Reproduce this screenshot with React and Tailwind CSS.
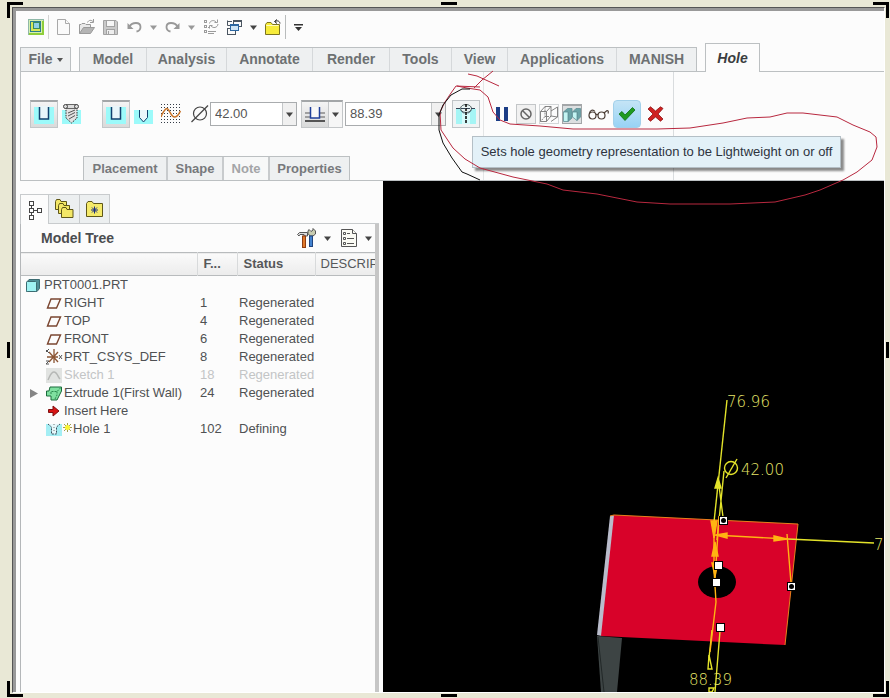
import React, { useState } from 'react';

const tabs = [
    { name: 'Model', width: 'w-[67px]' },
    { name: 'Analysis', width: 'w-20' },
    { name: 'Annotate', width: 'w-[86px]' },
    { name: 'Render', width: 'w-[77px]' },
    { name: 'Tools', width: 'w-[62px]' },
    { name: 'View', width: 'w-14' },
    { name: 'Applications', width: 'w-[109px]' },
    { name: 'MANISH', width: 'w-[79px]' },
];

const subTabs = [
    { name: 'Placement', width: 'w-[84px]' },
    { name: 'Shape', width: 'w-14' },
    { name: 'Note', width: 'w-[46px]', disabled: true },
    { name: 'Properties', width: 'w-[79px]' },
];

const rows = [
    { name: 'PRT0001.PRT', icon: 'part', root: true },
    { name: 'RIGHT', icon: 'plane', num: '1', status: 'Regenerated' },
    { name: 'TOP', icon: 'plane', num: '4', status: 'Regenerated' },
    { name: 'FRONT', icon: 'plane', num: '6', status: 'Regenerated' },
    { name: 'PRT_CSYS_DEF', icon: 'csys', num: '8', status: 'Regenerated' },
    { name: 'Sketch 1', icon: 'sketch', num: '18', status: 'Regenerated', muted: true },
    { name: 'Extrude 1(First Wall)', icon: 'extrude', num: '24', status: 'Regenerated', expandable: true },
    { name: 'Insert Here', icon: 'insert' },
    { name: 'Hole 1', icon: 'hole', num: '102', status: 'Defining', isNew: true },
];

const Caret = ({ className = 'text-[#444]' }) => (
    <svg width="7" height="5" viewBox="0 0 7 5" className={`shrink-0 ${className}`}>
        <path d="M0 0.5H7L3.5 5Z" fill="currentColor" />
    </svg>
);

/* ---- quick access icons ---- */

const AppIcon = () => (
    <svg width="16" height="16" viewBox="0 0 16 16">
        <rect x="0.5" y="0.5" width="15" height="15" fill="#d5efb0" stroke="#8fb8a8" />
        <path d="M1 15H15V2" fill="none" stroke="#8fce3a" strokeWidth="2" />
        <rect x="2.5" y="2.5" width="10" height="10" fill="#8ed2e6" stroke="#2c7d8e" />
        <path d="M3 3H5V10H12V12H3Z" fill="#d8e858" />
        <rect x="5.5" y="3.5" width="6" height="6" fill="#8fd0e8" stroke="#3b8a62" />
    </svg>
);

const NewIcon = () => (
    <svg width="13" height="16" viewBox="0 0 13 16" fill="#fafafa" stroke="#a9a9a9">
        <path d="M0.5 0.5H8.5L12.5 4.5V15.5H0.5Z" />
        <path d="M8.5 0.5V4.5H12.5" />
    </svg>
);

const OpenIcon = () => (
    <svg width="16" height="16" viewBox="0 0 16 16" fill="none" stroke="#9a9a9a">
        <path d="M0.5 14.5V5.5H2L3 4.5H6L7 5.5H11.5V8.5" fill="#e9e9e9" />
        <path d="M0.5 14.5L4.5 8.5H15.5L11.5 14.5Z" fill="#b4b4b4" />
        <path d="M8.5 3.5C9.5 1 12.5 0.5 14.5 3M14.5 0V3.5H11" />
    </svg>
);

const SaveIcon = () => (
    <svg width="15" height="15" viewBox="0 0 15 15" stroke="#a2a2a2">
        <path d="M0.5 0.5H13L14.5 2V14.5H0.5Z" fill="#c9c9c9" />
        <rect x="3.5" y="0.5" width="8" height="6" fill="#f6f6f6" />
        <rect x="3.5" y="9.5" width="8" height="5" fill="#eee" />
        <path d="M5.5 11V14" />
    </svg>
);

const UndoIcon = ({ flip }) => (
    <svg width="15" height="12" viewBox="0 0 15 12" className={flip ? '-scale-x-100' : ''}>
        <path d="M2.5 5.5C5 1 13.5 0.5 13.5 6C13.5 8.5 12 10 9.5 10.5" fill="none" stroke="#999" strokeWidth="1.8" />
        <path d="M0.5 2V8H6.5Z" fill="#999" />
    </svg>
);

const RegenIcon = () => (
    <svg width="16" height="16" viewBox="0 0 16 16" fill="none" stroke="#9b9b9b">
        <rect x="1.5" y="1.5" width="2" height="2" />
        <rect x="1.5" y="6.5" width="2" height="2" />
        <rect x="1.5" y="11.5" width="2" height="2" />
        <path d="M5 12.5H13M5 14.5H11M5 8.5H7" />
        <path d="M6.500 4.500C7 1.500 11 0.500 13 3M14.500 0.500V3.500H11.500M15 5C14.500 9 10 9.500 8 7M6.500 9.500V6.500H9.500" />
    </svg>
);

const WindowsIcon = () => (
    <svg width="15" height="15" viewBox="0 0 15 15" fill="#fafafa" stroke="#4a5560">
        <rect x="6.5" y="0.5" width="8" height="6" />
        <path d="M6.5 1.5H14.5" />
        <rect x="0.5" y="8.5" width="8" height="6" />
        <path d="M0.5 1.5H5M0.5 0.5V5.5H3" />
        <rect x="3.5" y="4.5" width="8" height="6" fill="#cfe5f5" stroke="#2b66a0" />
        <path d="M3.5 5.5H11.5" stroke="#2b66a0" />
    </svg>
);

const CloseFolderIcon = () => (
    <svg width="16" height="16" viewBox="0 0 16 16">
        <path d="M0.5 15.5V5.5L2 3.5H6L7.5 5.5H14.5V15.5Z" fill="#f7ec3a" stroke="#7c7420" />
        <path d="M1.5 7V6.5H13.5" stroke="#fffbc0" fill="none" />
        <path d="M15 4.5C14.5 1.5 12 1.5 10 2.5M12 0.5L9.5 2.5L12 4.5" stroke="#222" fill="none" />
    </svg>
);

/* ---- dashboard icons ---- */

const HoleU = () => (
    <svg width="20" height="18" viewBox="0 0 20 18">
        <rect y="1" width="20" height="17" fill="#9cfafa" />
        <path d="M5 0H15V13H5Z" fill="#e9f6fa" />
        <path d="M5.5 1V13H14.5V1" fill="none" stroke="#12406e" strokeWidth="1.5" />
    </svg>
);

const HoleScrew = () => (
    <svg width="19" height="20" viewBox="0 0 19 20">
        <rect y="6" width="19" height="14" fill="#9cfafa" />
        <path d="M4 4H15V14L9.5 19L4 14Z" fill="#e3e3e3" stroke="#333" strokeDasharray="1.5 1" />
        <path d="M6 9L13 6M6 12L13 8.5M7 15L13 11.5" stroke="#555" />
        <rect x="4.5" y="0.5" width="10" height="4" fill="#ddd" stroke="#666" />
        <circle cx="3.5" cy="2.5" r="2" fill="#ddd" stroke="#444" />
        <circle cx="14.5" cy="2.5" r="2" fill="#ddd" stroke="#444" />
    </svg>
);

const HoleV = () => (
    <svg width="19" height="15" viewBox="0 0 19 15">
        <rect y="1" width="19" height="14" fill="#9cfafa" />
        <path d="M5.5 1V8.5L9.5 13L13.5 8.5V1" fill="#e9f6fa" stroke="#12406e" />
    </svg>
);

const HoleSketch = () => (
    <svg width="20" height="20" viewBox="0 0 20 20">
        <path
            d="M0 0.5H20M0 3.5H20M0 6.5H20M0 9.5H20M0 12.5H20M0 15.5H20M0 18.5H20"
            stroke="#333b46"
            strokeDasharray="1 2"
        />
        <path d="M0 13C1 10 4 4.500 6 4.500S10 13 13.500 13S18 9 19.500 7" fill="none" stroke="#c8742a" strokeWidth="1.5" />
    </svg>
);

const DiameterIcon = () => (
    <svg width="18" height="18" viewBox="0 0 18 18" fill="none" stroke="#444" strokeWidth="1.2">
        <circle cx="9" cy="8.5" r="6.5" />
        <path d="M0.5 17L17 0.5" />
    </svg>
);

const DepthIcon = () => (
    <svg width="20" height="16" viewBox="0 0 20 16">
        <path d="M0 6H5M15 6H20M0 10H5M15 10H20" stroke="#888" strokeWidth="1.5" />
        <path d="M0 14H20" stroke="#555" strokeWidth="2" />
        <path d="M5.5 0V11H14.5V0" fill="#f8f8f8" stroke="#1f3f9a" strokeWidth="1.5" />
    </svg>
);

const LightweightIcon = () => (
    <svg width="20" height="20" viewBox="0 0 20 20">
        <rect y="5" width="20" height="15" fill="#a5f5f5" />
        <rect x="6" y="5" width="8" height="15" fill="#d6fbfb" />
        <ellipse cx="10" cy="4.5" rx="5.5" ry="4" fill="#e8f4f4" stroke="#566" />
        <path d="M0 4.5H20" stroke="#345" strokeDasharray="4 1" />
        <path d="M5 6.500L8 9.500M15 6.500L12 9.500" stroke="#345" />
        <path d="M10 0V20" stroke="#111" strokeWidth="1.600" strokeDasharray="3 1" />
    </svg>
);

const NoIcon = () => (
    <svg width="12" height="12" viewBox="0 0 12 12" fill="none" stroke="#666" strokeWidth="1.5">
        <circle cx="6" cy="6" r="5" />
        <path d="M2.5 2.5L9.5 9.5" />
    </svg>
);

const WireBox = () => (
    <svg width="18" height="16" viewBox="0 0 18 16" fill="none" stroke="#777" strokeWidth="0.9">
        <path d="M0.5 5.5H6.5V15.5H0.5ZM0.5 5.5L5 0.5H11L6.5 5.5M11 0.5V10L6.5 15.5" />
        <path d="M5 0.5V10.5H11M5 10.5L0.5 15.5" strokeDasharray="2 1" />
        <path d="M11 5L17.5 1V11L11 15.5M11 10L17.5 11" />
    </svg>
);

const ShadedBox = () => (
    <svg width="18" height="15" viewBox="0 0 18 15" stroke="#5f8f96" strokeWidth="0.8">
        <path d="M0.5 5L4.5 1.5H9V11L5 14.5V5Z" fill="#6aa4a8" />
        <path d="M0.5 5H5V14.5H0.5Z" fill="#c4f5f3" />
        <path d="M9.5 5L13 1.5H17.5V10L14 13.5V5Z" fill="#6aa4a8" />
        <path d="M9.5 5H14V13.5L9.5 10Z" fill="#c4f5f3" />
    </svg>
);

const Glasses = () => (
    <svg width="21" height="11" viewBox="0 0 21 11" fill="none" stroke="#4a3c34" strokeWidth="1.2">
        <circle cx="4.5" cy="6.5" r="3.5" />
        <circle cx="13.5" cy="6.5" r="3.5" />
        <path d="M8 6C8.5 5 9.5 5 10 6M1.5 4.5C2 1 5 0 7 2.5M16 4L19 1.5C20.5 1.5 20.5 3 20 4.5" />
    </svg>
);

const CheckIcon = () => (
    <svg width="18" height="14" viewBox="0 0 18 14">
        <path d="M1 7L4 4.5L7 8L14.5 0.5L17 3L7 13.5Z" fill="#1f9a1f" stroke="#0d6f12" strokeWidth="0.8" />
    </svg>
);

const CrossIcon = () => (
    <svg width="17" height="16" viewBox="0 0 17 16">
        <path
            d="M1 3L3.5 0.8L8.5 5L13.5 0.8L16 2.5L11 8L16 13L13.5 15.2L8.5 11L3.5 15.2L1 13L6 8Z"
            fill="#cf2222"
            stroke="#8e1414"
            strokeWidth="0.8"
        />
    </svg>
);

/* ---- model tree icons ---- */

const treeIcons = {
    part: (
        <svg width="14" height="13" viewBox="0 0 14 13" stroke="#3c6c72">
            <path d="M0.5 3.5L3 0.5H13.5V9.5L11 12.5H0.5Z" fill="#4f8f96" />
            <rect x="0.5" y="2.5" width="10" height="10" rx="1" fill="#9ff3f3" />
        </svg>
    ),
    plane: (
        <svg width="16" height="11" viewBox="0 0 16 11">
            <path d="M1.5 10L5 1H14.5L10.5 10Z" fill="none" stroke="#7a4630" strokeWidth="1.4" />
        </svg>
    ),
    csys: (
        <svg width="17" height="16" viewBox="0 0 17 16" fill="none" stroke="#8b5534">
            <path d="M1 8H12M8 0V14M3 3L12 13M12 3L3 13" strokeWidth="1.3" />
            <path d="M0 1L3 4M3 0L0 3M13 6L16 10M16 6L13 10M0 12H3L0 15H3" stroke="#555" />
        </svg>
    ),
    sketch: (
        <svg width="16" height="15" viewBox="0 0 16 15">
            <rect width="16" height="15" fill="#e1e3e1" />
            <path d="M2 12C4 8 5 4 8 4S12 9 14 11" fill="none" stroke="#b5b7b5" strokeWidth="1.5" />
        </svg>
    ),
    extrude: (
        <svg width="16" height="15" viewBox="0 0 16 15">
            <path d="M4 1H15.5V5L11 14H5V10H0.5V5H3Z" fill="#7fe0a0" stroke="#1b6b3b" />
            <path d="M5 8V5.5H11L15 1.5M11 5.5V9L9 13" fill="none" stroke="#2a8a4f" strokeDasharray="2 1" />
        </svg>
    ),
    insert: (
        <svg width="12" height="12" viewBox="0 0 12 12">
            <path d="M0.5 4.5H5V1L11 6L5 11V7.5H0.5Z" fill="#d81414" stroke="#7e1010" />
        </svg>
    ),
    hole: (
        <svg width="16" height="13" viewBox="0 0 16 13">
            <rect y="1" width="16" height="12" fill="#a4eef4" />
            <path d="M2 1L5.5 4V11H10.5V4L14 1" fill="#e6f8fb" stroke="#3a4f5c" strokeDasharray="2 1" />
            <path d="M8 1V10" stroke="#777" strokeDasharray="1 2" />
        </svg>
    ),
};

const NewMark = () => (
    <svg width="9" height="9" viewBox="0 0 9 9" className="mb-1">
        <path d="M4.5 0V9M0 4.5H9M1 1L8 8M8 1L1 8" stroke="#8a8420" strokeWidth="0.8" />
        <circle cx="4.5" cy="4.5" r="2.5" fill="#f8f430" />
    </svg>
);

const TreeTabIcon = () => (
    <svg width="14" height="20" viewBox="0 0 14 20" fill="none" stroke="#444">
        <rect x="1.5" y="1.5" width="4" height="4" />
        <rect x="1.5" y="8.5" width="4" height="4" />
        <rect x="1.5" y="15.5" width="4" height="4" />
        <rect x="9.5" y="8.5" width="4" height="4" />
        <path d="M3.5 5.5V8.5M3.5 12.5V15.5M5.5 10.5H9.5" />
    </svg>
);

const FoldersIcon = () => (
    <svg width="19" height="20" viewBox="0 0 19 20" fill="#f3e766" stroke="#5f5718">
        <path d="M0.5 10.5V2.5L1.5 0.5H5L6 2.5H11.5V10.5Z" />
        <path d="M3.5 14.5V6.5L4.5 4.5H8L9 6.5H14.5V14.5Z" />
        <path d="M6.5 18.5V10.5L7.5 8.5H11L12 10.5H18V18.5Z" />
    </svg>
);

const FavoritesIcon = () => (
    <svg width="17" height="16" viewBox="0 0 17 16">
        <path d="M0.5 15.5V2.5L2 0.5H6L7.5 2.5H16.5V15.5Z" fill="#f5ea6a" stroke="#5f5718" />
        <path d="M8.5 5.5V12.5M5 9H12M6 6.5L11 11.5M11 6.5L6 11.5" stroke="#1b2f80" />
    </svg>
);

const ToolsIcon = () => (
    <svg width="19" height="20" viewBox="0 0 19 20">
        <path d="M0.5 6.5L2.5 4.5H10.5V8H7V6.5H3L2 8Z" fill="#ddd" stroke="#555" />
        <rect x="5.5" y="8" width="3" height="11.5" fill="#e07a2c" stroke="#8e3d12" />
        <path d="M12 1.5L14 3.5L16 2V0.5L18.5 3V6L16 8H13L11 5.5V3Z" fill="#c8ccb0" stroke="#555" />
        <rect x="12.5" y="8" width="3" height="10.5" fill="#4383d0" stroke="#20447e" />
    </svg>
);

const SettingsIcon = () => (
    <svg width="16" height="18" viewBox="0 0 16 18" fill="#fbfbf4" stroke="#555">
        <path d="M0.5 0.5H11.5L15.5 4.5V17.5H0.5Z" />
        <path d="M11.5 0.5V4.5H15.5M6 4.5H9M6 9.5H13M6 14.5H13" />
        <path d="M2.5 3.5H4.5V5.5H2.5ZM2.5 8.5H4.5V10.5H2.5ZM2.5 13.5H4.5V15.5H2.5Z" />
    </svg>
);

/* ---- page parts ---- */

const QuickBar = () => (
    <div className="flex items-center h-8 pl-3">
        <button aria-label="Window menu"><AppIcon /></button>
        <span className="w-px h-6 ml-1 bg-[#d3d3d3]" />
        <button aria-label="New" className="ml-2"><NewIcon /></button>
        <button aria-label="Open" className="ml-[9px]"><OpenIcon /></button>
        <button aria-label="Save" className="ml-2"><SaveIcon /></button>
        <button aria-label="Undo" className="ml-[9px]"><UndoIcon /></button>
        <button aria-label="Undo list" className="ml-2"><Caret className="text-[#999]" /></button>
        <button aria-label="Redo" className="ml-2"><UndoIcon flip /></button>
        <button aria-label="Redo list" className="ml-2"><Caret className="text-[#999]" /></button>
        <button aria-label="Regenerate" className="ml-2"><RegenIcon /></button>
        <button aria-label="Windows" className="ml-2"><WindowsIcon /></button>
        <button aria-label="Windows list" className="ml-2"><Caret /></button>
        <button aria-label="Close" className="ml-2"><CloseFolderIcon /></button>
        <span className="w-px h-6 ml-1 bg-[#b9bcbc]" />
        <button aria-label="Customize" className="ml-2">
            <svg width="9" height="7" viewBox="0 0 9 7" fill="#333">
                <path d="M0 0H9V1.5H0ZM1 3H8L4.5 7Z" />
            </svg>
        </button>
    </div>
);

const TabBar = () => (
    <div className="flex items-end h-[29px] pl-1 text-[14px] font-bold text-[#6d7072]">
        <button className="flex items-center justify-center gap-1 w-[51px] h-[25px] border border-[#bcc0c2] bg-[#eef0f1]">
            File
            <svg width="6" height="4" viewBox="0 0 6 4"><path d="M0 0H6L3 4Z" fill="#555" /></svg>
        </button>
        <span className="w-2 h-px bg-[#bcc0c2]" />
        <div className="flex h-[25px] border border-[#bcc0c2] bg-[#eef0f1] divide-x divide-[#d5d8da]">
            {tabs.map((t) => (
                <button key={t.name} className={`text-center whitespace-nowrap ${t.width}`}>{t.name}</button>
            ))}
        </div>
        <span className="w-2 h-px bg-[#bcc0c2]" />
        <button className="w-[55px] h-[29px] pt-px border border-b-0 border-[#bcc0c2] bg-[#fcfcfc] italic text-[#3a3d40]">Hole</button>
        <span className="flex-1 h-px bg-[#bcc0c2]" />
    </div>
);

const boxed = 'flex items-center justify-center border border-[#c3c6c8] border-t-2 border-t-[#a3a6a8] bg-linear-to-b from-[#f4f4f4] to-[#d9dada]';

const NumberBox = ({ label, value, width }) => {
    const [text, setText] = useState(value);
    return (
        <div className="flex h-6 border border-[#a9acae] bg-white">
            <input
                aria-label={label}
                value={text}
                onChange={(e) => setText(e.target.value)}
                className={`px-1 text-[13px] text-[#555] outline-none ${width}`}
            />
            <button aria-label={`${label} list`} className="flex items-center justify-center w-[14px] border-l border-[#c3c6c8] bg-[#f0f0f0]">
                <Caret />
            </button>
        </div>
    );
};

const Dashboard = () => (
    <div className="relative ml-1 h-[109px] pt-7 border-l border-b border-[#bcc0c2]">
        <span className="absolute left-[462px] top-0 w-px h-full bg-[#e3e5e6]" />
        <span className="absolute left-[652px] top-0 w-px h-full bg-[#d9dcde]" />
        <div className="relative flex items-center h-7 pl-[9px]">
            <button aria-label="Simple hole" className={`w-7 h-7 ${boxed}`}><HoleU /></button>
            <button aria-label="Standard hole" className="ml-1"><HoleScrew /></button>
            <button aria-label="Predefined profile" className={`w-7 h-7 ml-[21px] ${boxed}`}><HoleU /></button>
            <button aria-label="Drill profile" className="ml-1 pt-1"><HoleV /></button>
            <button aria-label="Sketched profile" className="ml-2"><HoleSketch /></button>
            <span className="ml-[10px] mr-px"><DiameterIcon /></span>
            <NumberBox label="Diameter" value="42.00" width="w-[71px]" />
            <div className={`w-[42px] h-7 ml-1 ${boxed}`}>
                <button aria-label="Depth" className="flex items-center justify-center flex-1"><DepthIcon /></button>
                <button aria-label="Depth options" className="flex items-center justify-center w-[14px] h-full border-l border-[#c3c6c8] bg-[#f6f6f6]">
                    <Caret />
                </button>
            </div>
            <span className="w-[2px]" />
            <NumberBox label="Depth value" value="88.39" width="w-[85px]" />
            <button aria-label="Lightweight" className="flex items-center justify-center w-7 h-7 ml-[6px] border border-[#bfc4c7] bg-[#f0f3f4]">
                <LightweightIcon />
            </button>
            <button aria-label="Pause" className="flex gap-1 ml-4">
                <span className="w-1 h-[14px] bg-[#1c3d86]" />
                <span className="w-1 h-[14px] bg-[#1c3d86]" />
            </button>
            <button aria-label="No preview" className="flex items-center justify-center w-5 h-5 ml-2 border border-[#c3c6c8] bg-[#f1f1f1]"><NoIcon /></button>
            <button aria-label="Unattached preview" className="flex items-center justify-center w-5 h-5 ml-[3px] border border-[#d3d6d8]"><WireBox /></button>
            <button aria-label="Attached preview" className="flex items-center justify-center w-5 h-5 ml-[3px] border border-t-2 border-[#a3a6a8] bg-[#dcdfe0]"><ShadedBox /></button>
            <button aria-label="Verify" className="ml-[6px]"><Glasses /></button>
            <button aria-label="Accept" className="flex items-center justify-center w-7 h-7 ml-1 rounded-sm border border-[#a3d0ea] bg-linear-to-b from-[#c4e4f6] to-[#98d3f5]">
                <CheckIcon />
            </button>
            <button aria-label="Cancel" className="ml-[6px]"><CrossIcon /></button>
        </div>
        <div className="flex w-fit h-6 mt-7 ml-[62px] border border-b-0 border-[#bcc0c2] divide-x-2 divide-[#c8cbcd] bg-[#eef0f1] text-[13px] font-bold text-[#77797c]">
            {subTabs.map((t) => (
                <button
                    key={t.name}
                    disabled={t.disabled}
                    className={`text-center whitespace-nowrap ${t.width} ${t.disabled ? 'bg-[#f7f8f8] text-[#a3a5a7]' : ''}`}
                >
                    {t.name}
                </button>
            ))}
        </div>
        <div role="tooltip" className="absolute z-10 left-[451px] top-16 flex items-center justify-center w-[369px] h-8 border border-[#b4bfc6] bg-[#e3f1f8] text-[13px] text-[#2e3440] whitespace-nowrap shadow-[3px_3px_2px_rgba(0,0,0,0.45)]">
            Sets hole geometry representation to be Lightweight on or off
        </div>
    </div>
);

const TreeRow = ({ row }) => (
    <tr className={`h-[18px] ${row.muted ? 'text-[#c3c5c6]' : 'text-[#4f5153]'}`}>
        <td className="p-0">
            <div className="flex items-center h-[18px] pl-1">
                {!row.root && (
                    <span className="w-5 pl-[5px]">
                        {row.expandable && (
                            <svg width="8" height="9" viewBox="0 0 8 9"><path d="M0 0L8 4.5L0 9Z" fill="#858585" /></svg>
                        )}
                    </span>
                )}
                <span className={`flex w-[18px] ${row.root ? 'pl-px' : 'justify-center'}`}>{treeIcons[row.icon]}</span>
                {row.isNew && <NewMark />}
                <span className="pl-px">{row.name}</span>
            </div>
        </td>
        <td className="p-0 pl-[3px]">{row.num}</td>
        <td className="p-0 pl-[2px]">{row.status}</td>
        <td />
    </tr>
);

const ModelTree = () => (
    <div className="flex flex-col w-[359px] shrink-0 ml-1 mr-1 pt-[13px]">
        <div className="flex h-[30px]">
            <button aria-label="Model tree" className="flex items-center justify-center w-[29px] border border-b-0 border-[#c8cbcd]"><TreeTabIcon /></button>
            <button aria-label="Folder browser" className="flex items-center justify-center w-[30px] border-t border-b border-[#c8cbcd] bg-[#eceff0]"><FoldersIcon /></button>
            <button aria-label="Favorites" className="flex items-center justify-center w-[31px] border border-[#c8cbcd] bg-[#eceff0]"><FavoritesIcon /></button>
            <span className="flex-1 border-b border-[#c8cbcd]" />
        </div>
        <div className="flex flex-1 flex-col border-l border-[#b4b7b9] border-r-4 border-r-[#c6c6c6]">
            <div className="flex items-center h-7 pl-5 pr-[3px]">
                <h2 className="flex-1 text-[14px] font-bold text-[#4b4d50]">Model Tree</h2>
                <button aria-label="Tree tools"><ToolsIcon /></button>
                <button aria-label="Tree tools list" className="ml-2"><Caret /></button>
                <button aria-label="Settings" className="ml-[10px]"><SettingsIcon /></button>
                <button aria-label="Settings list" className="ml-2"><Caret /></button>
            </div>
            <div className="flex-1 overflow-hidden">
                <table className="w-full table-fixed border-collapse text-[13px] leading-[18px]">
                    <thead>
                        <tr className="h-[23px] border-y border-[#b8bbbd] bg-linear-to-b from-[#fafafa] to-[#ececec] text-left text-[#56585a]">
                            <th className="w-44 p-0" aria-label="Name" />
                            <th className="w-10 p-0 pl-[6px] border-l border-[#d8dadb]">F...</th>
                            <th className="w-[78px] p-0 pl-[6px] border-l border-[#d8dadb]">Status</th>
                            <th className="p-0 pl-[5px] border-l border-[#d8dadb] font-medium overflow-hidden whitespace-nowrap">DESCRIP</th>
                        </tr>
                    </thead>
                    <tbody>
                        {rows.map((row) => <TreeRow key={row.name} row={row} />)}
                    </tbody>
                </table>
            </div>
        </div>
    </div>
);

const Grip = ({ x, y, ring }) => (
    <g>
        <rect x={x - 4} y={y - 4} width="8" height="8" fill="#fff" stroke="#000" />
        {ring && <circle cx={x} cy={y} r="2.5" fill="#000" />}
    </g>
);

const Viewport = () => (
    <div className="flex-1 min-w-0 overflow-hidden bg-black">
        <svg width="501" height="511" viewBox="383 181 501 511" fill="none">
            <path d="M597 636L622 638L617 692H601Z" fill="#3d4444" />
            <path d="M598 637L604 692" stroke="#222828" />
            <path d="M610 516L615 515L602 636L597 635Z" fill="#b9bccb" />
            <path d="M614 515L798 524L785 645L601 636Z" fill="#d80229" />
            <path d="M610 516L614 515L798 524L785 645" stroke="#e8801c" />
            <ellipse cx="717" cy="582" rx="19" ry="16" fill="#000" />
            <g stroke="#e3e32a" strokeWidth="1.4">
                <path d="M727 400L714 522" />
                <path d="M724 471L717 540M718 478L723 517" />
                <path d="M788 539L874 543" />
                <path d="M720 631L715 692M712 630L709 658" />
                <path d="M718 478L715 488H721Z" fill="#e3e32a" />
                <path d="M709 655L708 669H712Z" />
                <path d="M709 688H714L712 692H709Z" />
            </g>
            <g stroke="#ffb412" strokeWidth="1.4">
                <path d="M714 522V570L716 602L710 652M719 516L715 580" />
                <path d="M711 521H717L714 538Z" fill="#ffb412" />
                <path d="M715 542L712 556H718ZM712 563H718L715 576Z" fill="#ffb412" />
                <path d="M714 535L788 539M787 534L791 583" />
                <path d="M716 535L727 533V538Z" fill="#ffb412" />
                <path d="M787 539L774 536V541Z" fill="#ffb412" />
            </g>
            <g fill="#e6e66a" fontSize="15" className="font-extralight font-['DejaVu_Sans_Light','DejaVu_Sans',sans-serif]">
                <text x="727" y="407">76.96</text>
                <text x="741" y="475">42.00</text>
                <text x="689" y="685">88.39</text>
                <text x="874" y="550">7</text>
            </g>
            <g stroke="#e3e32a" strokeWidth="1.4">
                <circle cx="731" cy="468" r="6.5" />
                <path d="M726 478L737 459" />
            </g>
            <Grip x={723.5} y={520.5} ring />
            <Grip x={791.5} y={586.5} ring />
            <Grip x={718.5} y={565.5} />
            <Grip x={716.5} y={582.5} />
            <Grip x={720.5} y={627.5} />
        </svg>
    </div>
);

const PenMarks = () => (
    <svg width="890" height="698" viewBox="0 0 890 698" fill="none" className="absolute left-0 top-0 z-20 pointer-events-none">
        <path
            d="M480 87L456 86L451 93L445 102L440 112L441 130L453 148L465 159L480 168L513 177L547 184L563 190L597 194L637 202L670 204H730L775 202L805 195L820 190L843 180L857 172L872 160L877 147L876 137L870 132L853 125L837 117L803 113H787L770 117L747 118L723 123L690 128L657 129H573L540 126L510 124L500 120L493 112L488 97L480 90L467 88L457 86"
            stroke="#b8283f"
        />
        <path d="M468 74L477 76L488 81L499 86M493 71L482 80L474 88" stroke="#b8283f" />
        <path d="M470 89H462L451 95L443 105L439 115V130L443 143L452 158L462 172L467 174L480 180" stroke="#111" />
    </svg>
);

const SelectionHandles = () => (
    <div className="absolute inset-0 z-30 pointer-events-none">
        <span className="absolute left-[7px] top-[2px] w-4 h-4 border-l-3 border-t-3 border-black" />
        <span className="absolute right-[1px] top-[2px] w-4 h-4 border-r-3 border-t-3 border-black" />
        <span className="absolute left-[7px] bottom-[1px] w-4 h-4 border-l-3 border-b-3 border-black" />
        <span className="absolute right-[1px] bottom-[1px] w-4 h-4 border-r-3 border-b-3 border-black" />
        <span className="absolute left-1/2 ml-[-4px] top-[2px] w-4 h-[3px] bg-black" />
        <span className="absolute left-1/2 ml-[-4px] bottom-[1px] w-4 h-[3px] bg-black" />
        <span className="absolute left-[7px] top-1/2 mt-[-7px] w-[3px] h-4 bg-black" />
        <span className="absolute right-[1px] top-1/2 mt-[-7px] w-[3px] h-4 bg-black" />
    </div>
);

const App = () => {
    return (
        <div className="relative flex flex-col min-h-screen overflow-hidden pt-[7px] pl-3 pr-[5px] pb-[5px] bg-[#e9e8d6] font-['Liberation_Sans',Arial,sans-serif]">
            <div className="flex flex-1 flex-col border-l border-t border-[#555] border-r border-r-white border-b border-b-white">
                <div className="flex flex-1 flex-col border-l-3 border-t-3 border-[#999] bg-[#fcfcfc]">
                    <QuickBar />
                    <TabBar />
                    <Dashboard />
                    <div className="flex flex-1">
                        <ModelTree />
                        <Viewport />
                    </div>
                </div>
            </div>
            <PenMarks />
            <SelectionHandles />
        </div>
    );
};

export default App;
